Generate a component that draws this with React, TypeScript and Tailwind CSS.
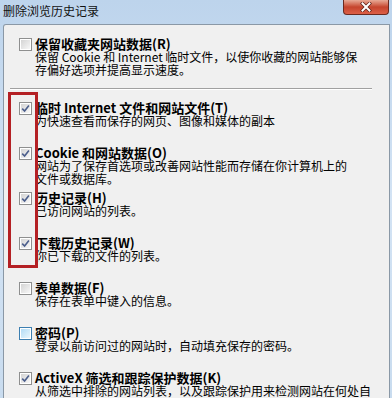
import React from "react";

type Opt = {
  title: string;
  desc: string[];
  checked?: boolean;
  hover?: boolean;
};

const OPTIONS: Opt[] = [
  {
    title: "保留收藏夹网站数据(R)",
    desc: ["保留 Cookie 和 Internet 临时文件，以使你收藏的网站能够保", "存偏好选项并提高显示速度。"],
  },
  { title: "临时 Internet 文件和网站文件(T)", desc: ["为快速查看而保存的网页、图像和媒体的副本"], checked: true },
  {
    title: "Cookie 和网站数据(O)",
    desc: ["网站为了保存首选项或改善网站性能而存储在你计算机上的", "文件或数据库。"],
    checked: true,
  },
  { title: "历史记录(H)", desc: ["已访问网站的列表。"], checked: true },
  { title: "下载历史记录(W)", desc: ["你已下载的文件的列表。"], checked: true },
  { title: "表单数据(F)", desc: ["保存在表单中键入的信息。"] },
  { title: "密码(P)", desc: ["登录以前访问过的网站时，自动填充保存的密码。"], hover: true },
  {
    title: "ActiveX 筛选和跟踪保护数据(K)",
    desc: ["从筛选中排除的网站列表，以及跟踪保护用来检测网站在何处自"],
    checked: true,
  },
];

function CheckBox({ checked, hover }: { checked?: boolean; hover?: boolean }) {
  return (
    <span
      className={
        hover
          ? "flex h-[13px] w-[13px] shrink-0 border border-[#3c7fb1] bg-white p-px"
          : "flex h-[13px] w-[13px] shrink-0 border border-[#8e8f8f] bg-white p-px"
      }
    >
      <span
        className={
          hover
            ? "relative flex flex-1 bg-gradient-to-br from-[#b2dcf6] to-[#e9f6fd]"
            : "relative flex flex-1 bg-gradient-to-br from-[#d4d4d4] to-[#f7f7f7]"
        }
      >
        {checked && (
          <svg viewBox="0 0 9 9" className="absolute inset-0 h-full w-full">
            <path d="M1.2 4.6 L3.6 7 L7.9 1.6" fill="none" stroke="#4b5e8c" strokeWidth="1.6" />
          </svg>
        )}
      </span>
    </span>
  );
}

function Item({ o }: { o: Opt }) {
  return (
    <div className="flex h-[45px] flex-col">
      <div className="flex h-[14px] items-center gap-[3px]">
        <CheckBox checked={o.checked} hover={o.hover} />
        <span className="whitespace-nowrap text-[13px] font-bold leading-[14px] text-black">{o.title}</span>
      </div>
      <div className="pl-[16px] text-[12px] leading-[12px] text-black">
        {o.desc.map((d) => (
          <div key={d} className="mt-px whitespace-nowrap first:mt-0">
            {d}
          </div>
        ))}
      </div>
    </div>
  );
}

export default function App() {
  return (
    <div
      className="relative flex h-[398px] w-[392px] flex-col overflow-hidden bg-gradient-to-b from-[#bdd4ec] via-[#d3e3f4] to-[#c9dcef]"
      style={{ fontFamily: '"Noto Sans CJK SC", "Noto Sans", sans-serif' }}
    >
      <div className="flex h-[24px] shrink-0 items-start justify-between pl-[3px] pr-[3px]">
        <span className="mt-[4px] text-[12px] leading-[14px] text-[#111]">删除浏览历史记录</span>
        <div className="flex h-[15px] w-[46px] items-center justify-center rounded-b-[4px] border border-t-0 border-[#6b2a1f] bg-gradient-to-b from-[#e7a996] via-[#c5442d] to-[#dc5f47]">
          <svg viewBox="0 0 12 10" className="h-[10px] w-[12px]">
            <path d="M2.5 1.5 L9.5 8.5 M9.5 1.5 L2.5 8.5" stroke="#5a2018" strokeWidth="3.4" strokeLinecap="square" />
            <path d="M2.5 1.5 L9.5 8.5 M9.5 1.5 L2.5 8.5" stroke="#ffffff" strokeWidth="2" strokeLinecap="square" />
          </svg>
        </div>
      </div>

      <div className="ml-[3px] mr-[2px] flex-1 rounded-tl-[3px] border-l border-r border-t border-[#8a98a6] bg-[#f0f0f0]">
        <div className="pl-[15px] pt-[12px]">
          <Item o={OPTIONS[0]} />
        </div>
        <div className="ml-[6px] mt-[6px] w-[362px] border-t border-b border-t-[#a0a0a0] border-b-white" />
        <div className="pl-[15px] pt-[11px]">
          {OPTIONS.slice(1).map((o) => (
            <Item key={o.title} o={o} />
          ))}
        </div>
      </div>

      <div className="absolute left-[8px] top-[92px] h-[176px] w-[30px] border-[3px] border-[#b42024]" />
    </div>
  );
}
